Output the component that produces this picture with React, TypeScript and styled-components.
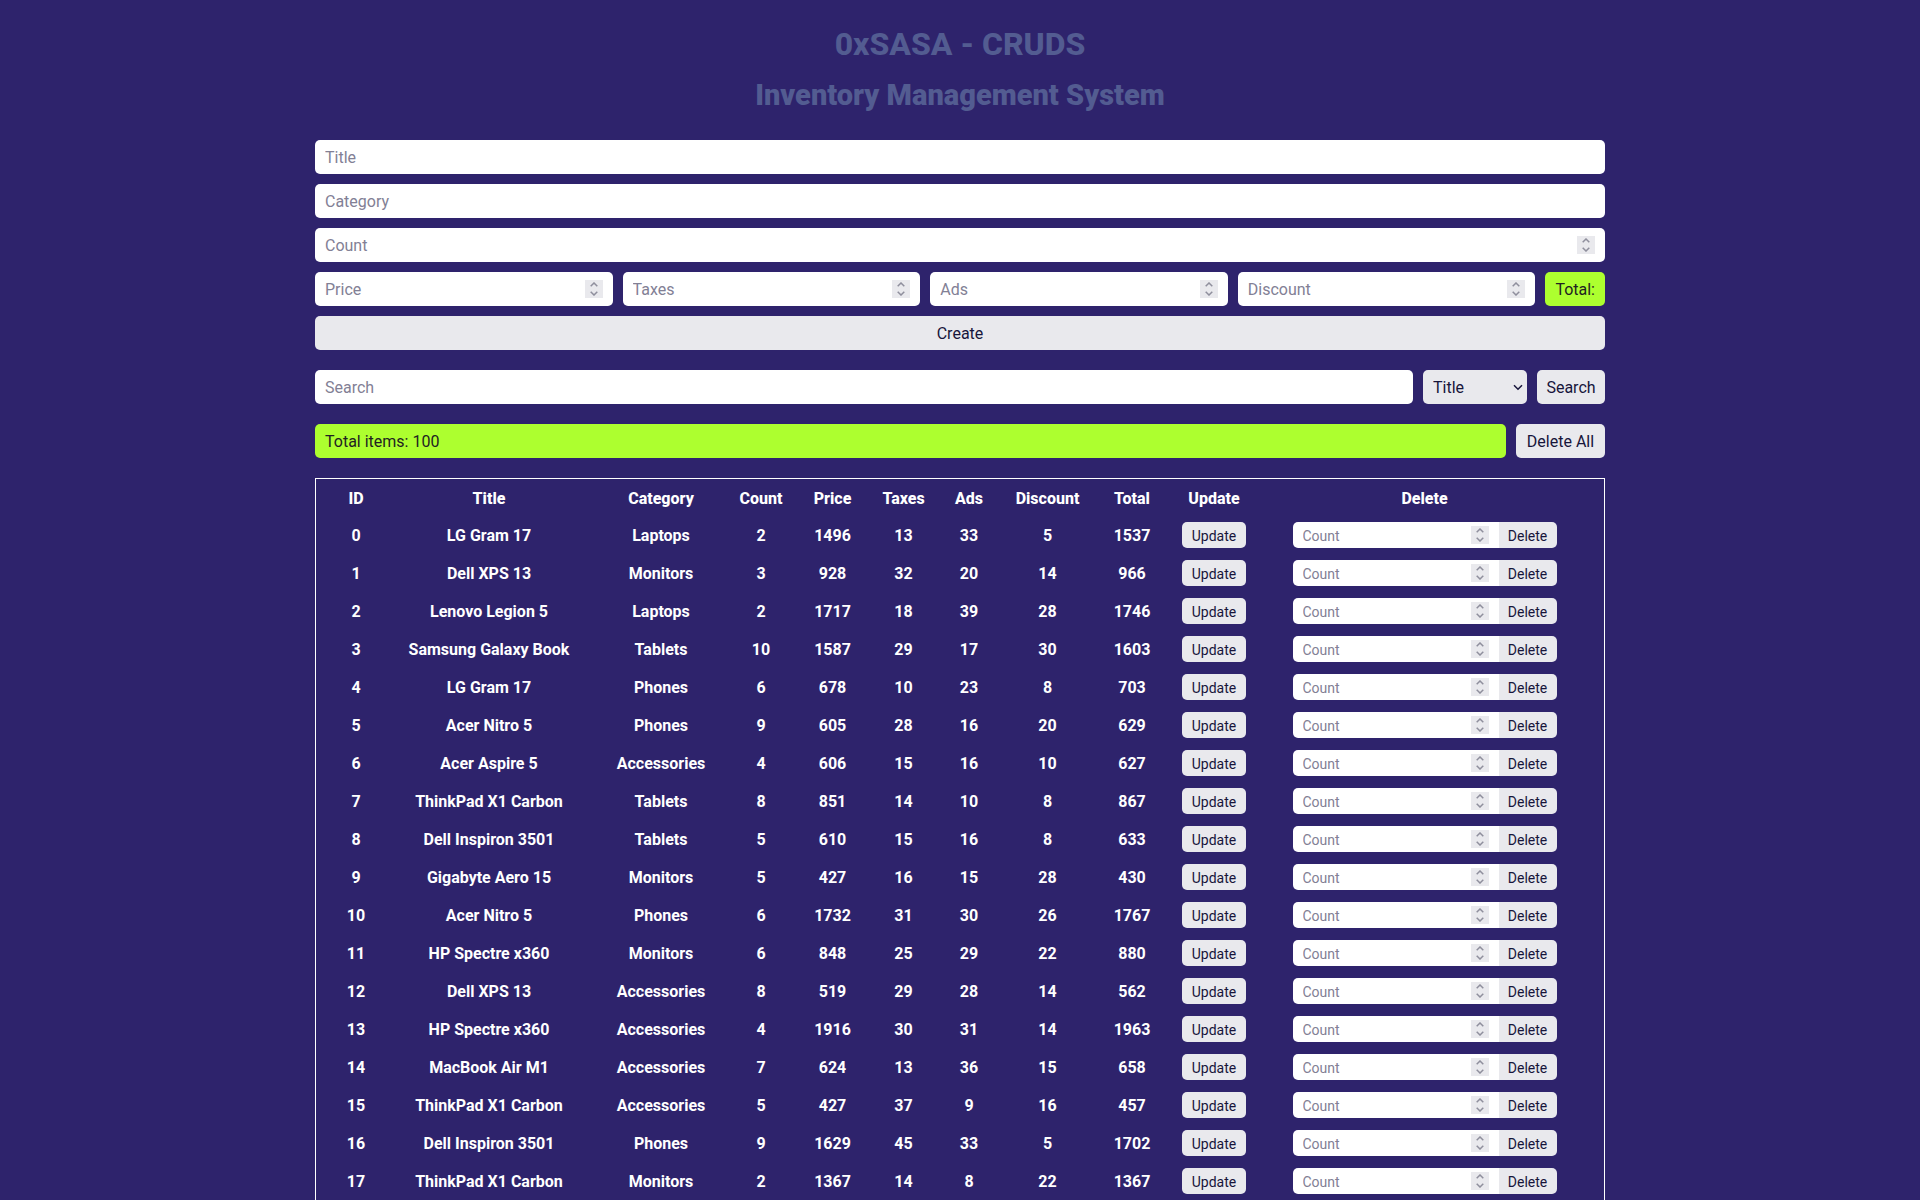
import React, { useRef, useState } from "react";
import styled, { createGlobalStyle, css } from "styled-components";

const GlobalStyle = createGlobalStyle`
  *, *::before, *::after { box-sizing: border-box; }
  body {
    margin: 0;
    background: #2e236c;
    color: #fff;
    font-family: Roboto, "Noto Sans", sans-serif;
    font-size: 16px;
    line-height: 24px;
  }
  button, input, select { font: inherit; }
`;

const Page = styled.main`
  max-width: 1320px;
  margin: 0 auto;
  padding: 20px 15px;
  display: flex;
  flex-direction: column;
  gap: 20px;
`;

const Header = styled.header`
  display: flex;
  flex-direction: column;
  gap: 2px;
  text-align: center;
  color: #535c91;
`;

const Heading = styled.h1`
  margin: 0;
  font-size: 32px;
  line-height: 48px;
  font-weight: 800;
`;

const SubHeading = styled.h2`
  margin: 0;
  font-size: 29px;
  line-height: 50px;
  font-weight: 900;
`;

const Form = styled.form`
  display: flex;
  flex-direction: column;
  gap: 10px;
`;

const Bar = styled.div`
  display: flex;
  gap: 10px;
`;

type Sized = { $small?: boolean };

const controlSize = css<Sized>`
  height: ${(p) => (p.$small ? 26 : 34)}px;
  padding: 2px 10px 0;
  font-size: ${(p) => (p.$small ? 14 : 16)}px;
  font-weight: 400;
`;

const Field = styled.div<Sized>`
  ${controlSize}
  padding-top: 0;
  flex: ${(p) => (p.$small ? "0 1 206px" : "1 1 auto")};
  display: flex;
  align-items: center;
  gap: 10px;
  min-width: 0;
  background: #fff;
  border-radius: ${(p) => (p.$small ? "5px 0 0 5px" : "5px")};
`;

const EvenField = styled(Field)`
  flex: 1 1 0;
`;

const Input = styled.input`
  flex: 1;
  min-width: 0;
  padding: 2px 0 0;
  border: 0;
  outline: 0;
  background: none;
  color: #17153b;
  appearance: textfield;
  &::placeholder { color: #828095; opacity: 1; }
  &::-webkit-inner-spin-button { display: none; }
`;

const Stepper = styled.span`
  flex: none;
  width: 18px;
  height: 18px;
  display: flex;
  flex-direction: column;
  background: #e9e9ed;
`;

const StepButton = styled.button`
  height: 9px;
  padding: 0;
  border: 0;
  background: none;
  display: flex;
  align-items: center;
  justify-content: center;
  color: #8f8f9d;
`;

const Button = styled.button<Sized & { $width?: number; $joined?: boolean }>`
  ${controlSize}
  padding: 2px 0 0;
  flex: ${(p) => (p.$width ? `0 0 ${p.$width}px` : "none")};
  border: 0;
  border-radius: ${(p) => (p.$joined ? "0 5px 5px 0" : "5px")};
  background: #e9e9ed;
  color: #17153b;
  cursor: pointer;
  white-space: nowrap;
`;

const Badge = styled.output<{ $grow?: boolean }>`
  ${controlSize}
  flex: ${(p) => (p.$grow ? "1" : "0 0 59px")};
  line-height: 32px;
  border-radius: 5px;
  background: #adff2f;
  color: #222;
  white-space: nowrap;
`;

const SelectBox = styled.div`
  position: relative;
  flex: none;
  width: 104px;
  svg {
    position: absolute;
    right: 4px;
    top: 14px;
    pointer-events: none;
  }
`;

const Select = styled.select`
  ${controlSize}
  width: 100%;
  border: 0;
  border-radius: 5px;
  appearance: none;
  background: #e9e9ed;
  color: #17153b;
`;

const TableFrame = styled.section`
  border: 1px solid #fff;
  padding: 0 15px 15px;
`;

const Table = styled.table`
  width: 100%;
  table-layout: fixed;
  border-collapse: collapse;
  text-align: center;
`;

const HeadCell = styled.th<{ $share: number }>`
  width: ${(p) => p.$share}px;
  height: 37px;
  padding: 2px 0 0;
  font-weight: 800;
`;

const Cell = styled.td<{ $text?: boolean }>`
  height: 38px;
  padding: ${(p) => (p.$text ? "2px 0 0" : "0")};
  font-weight: 700;
  white-space: nowrap;
`;

const CellActions = styled.div`
  display: flex;
  justify-content: center;
`;

type ItemRow = [string, string, number, number, number, number, number, number];

const columns: [string, number][] = [
  ["ID", 50], ["Title", 216], ["Category", 128], ["Count", 72], ["Price", 71], ["Taxes", 71],
  ["Ads", 60], ["Discount", 97], ["Total", 72], ["Update", 92], ["Delete", 329],
];

const items: ItemRow[] = [
  ["LG Gram 17", "Laptops", 2, 1496, 13, 33, 5, 1537],
  ["Dell XPS 13", "Monitors", 3, 928, 32, 20, 14, 966],
  ["Lenovo Legion 5", "Laptops", 2, 1717, 18, 39, 28, 1746],
  ["Samsung Galaxy Book", "Tablets", 10, 1587, 29, 17, 30, 1603],
  ["LG Gram 17", "Phones", 6, 678, 10, 23, 8, 703],
  ["Acer Nitro 5", "Phones", 9, 605, 28, 16, 20, 629],
  ["Acer Aspire 5", "Accessories", 4, 606, 15, 16, 10, 627],
  ["ThinkPad X1 Carbon", "Tablets", 8, 851, 14, 10, 8, 867],
  ["Dell Inspiron 3501", "Tablets", 5, 610, 15, 16, 8, 633],
  ["Gigabyte Aero 15", "Monitors", 5, 427, 16, 15, 28, 430],
  ["Acer Nitro 5", "Phones", 6, 1732, 31, 30, 26, 1767],
  ["HP Spectre x360", "Monitors", 6, 848, 25, 29, 22, 880],
  ["Dell XPS 13", "Accessories", 8, 519, 29, 28, 14, 562],
  ["HP Spectre x360", "Accessories", 4, 1916, 30, 31, 14, 1963],
  ["MacBook Air M1", "Accessories", 7, 624, 13, 36, 15, 658],
  ["ThinkPad X1 Carbon", "Accessories", 5, 427, 37, 9, 16, 457],
  ["Dell Inspiron 3501", "Phones", 9, 1629, 45, 33, 5, 1702],
  ["ThinkPad X1 Carbon", "Monitors", 2, 1367, 14, 8, 22, 1367],
];

function NumberField({ label, small, even }: { label: string; small?: boolean; even?: boolean }) {
  const ref = useRef<HTMLInputElement>(null);
  const Box = even ? EvenField : Field;
  return (
    <Box $small={small}>
      <Input ref={ref} type="number" placeholder={label} aria-label={label} />
      <Stepper>
        <StepButton type="button" tabIndex={-1} aria-label={`Increase ${label}`} onClick={() => ref.current?.stepUp()}>
          <svg width="8" height="5" viewBox="0 0 8 5" fill="none" stroke="currentColor" strokeWidth="1.5">
            <path d="M.7 4.3 4 1l3.3 3.3" />
          </svg>
        </StepButton>
        <StepButton type="button" tabIndex={-1} aria-label={`Decrease ${label}`} onClick={() => ref.current?.stepDown()}>
          <svg width="8" height="5" viewBox="0 0 8 5" fill="none" stroke="currentColor" strokeWidth="1.5">
            <path d="M.7.7 4 4 7.3.7" />
          </svg>
        </StepButton>
      </Stepper>
    </Box>
  );
}

function TextField({ label }: { label: string }) {
  return (
    <Field>
      <Input type="text" placeholder={label} aria-label={label} />
    </Field>
  );
}

export default function App() {
  const [searchBy, setSearchBy] = useState("Title");
  return (
    <>
      <GlobalStyle />
      <Page>
        <Header>
          <Heading>0xSASA - CRUDS</Heading>
          <SubHeading>Inventory Management System</SubHeading>
        </Header>
        <Form onSubmit={(e) => e.preventDefault()}>
          <TextField label="Title" />
          <TextField label="Category" />
          <NumberField label="Count" />
          <Bar>
            <NumberField even label="Price" />
            <NumberField even label="Taxes" />
            <NumberField even label="Ads" />
            <NumberField even label="Discount" />
            <Badge>Total:</Badge>
          </Bar>
          <Button type="submit">Create</Button>
        </Form>
        <Bar>
          <TextField label="Search" />
          <SelectBox>
            <Select aria-label="Search by" value={searchBy} onChange={(e) => setSearchBy(e.target.value)}>
              <option>Title</option>
              <option>Category</option>
            </Select>
            <svg width="10" height="7" viewBox="0 0 10 7" fill="none" stroke="#17153b" strokeWidth="1.5">
              <path d="M1 1.2 5 5.2l4-4" />
            </svg>
          </SelectBox>
          <Button $width={68} type="button">Search</Button>
        </Bar>
        <Bar>
          <Badge $grow>Total items: 100</Badge>
          <Button $width={89} type="button">Delete All</Button>
        </Bar>
        <TableFrame>
          <Table>
            <thead>
              <tr>
                {columns.map(([name, share]) => (
                  <HeadCell key={name} $share={share} scope="col">{name}</HeadCell>
                ))}
              </tr>
            </thead>
            <tbody>
              {items.map((item, id) => (
                <tr key={id}>
                  <Cell $text>{id}</Cell>
                  {item.map((value, i) => (
                    <Cell $text key={i}>{value}</Cell>
                  ))}
                  <Cell>
                    <CellActions>
                      <Button $small $width={64} type="button">Update</Button>
                    </CellActions>
                  </Cell>
                  <Cell>
                    <CellActions>
                      <NumberField small label="Count" />
                      <Button $small $joined $width={58} type="button">Delete</Button>
                    </CellActions>
                  </Cell>
                </tr>
              ))}
            </tbody>
          </Table>
        </TableFrame>
      </Page>
    </>
  );
}
